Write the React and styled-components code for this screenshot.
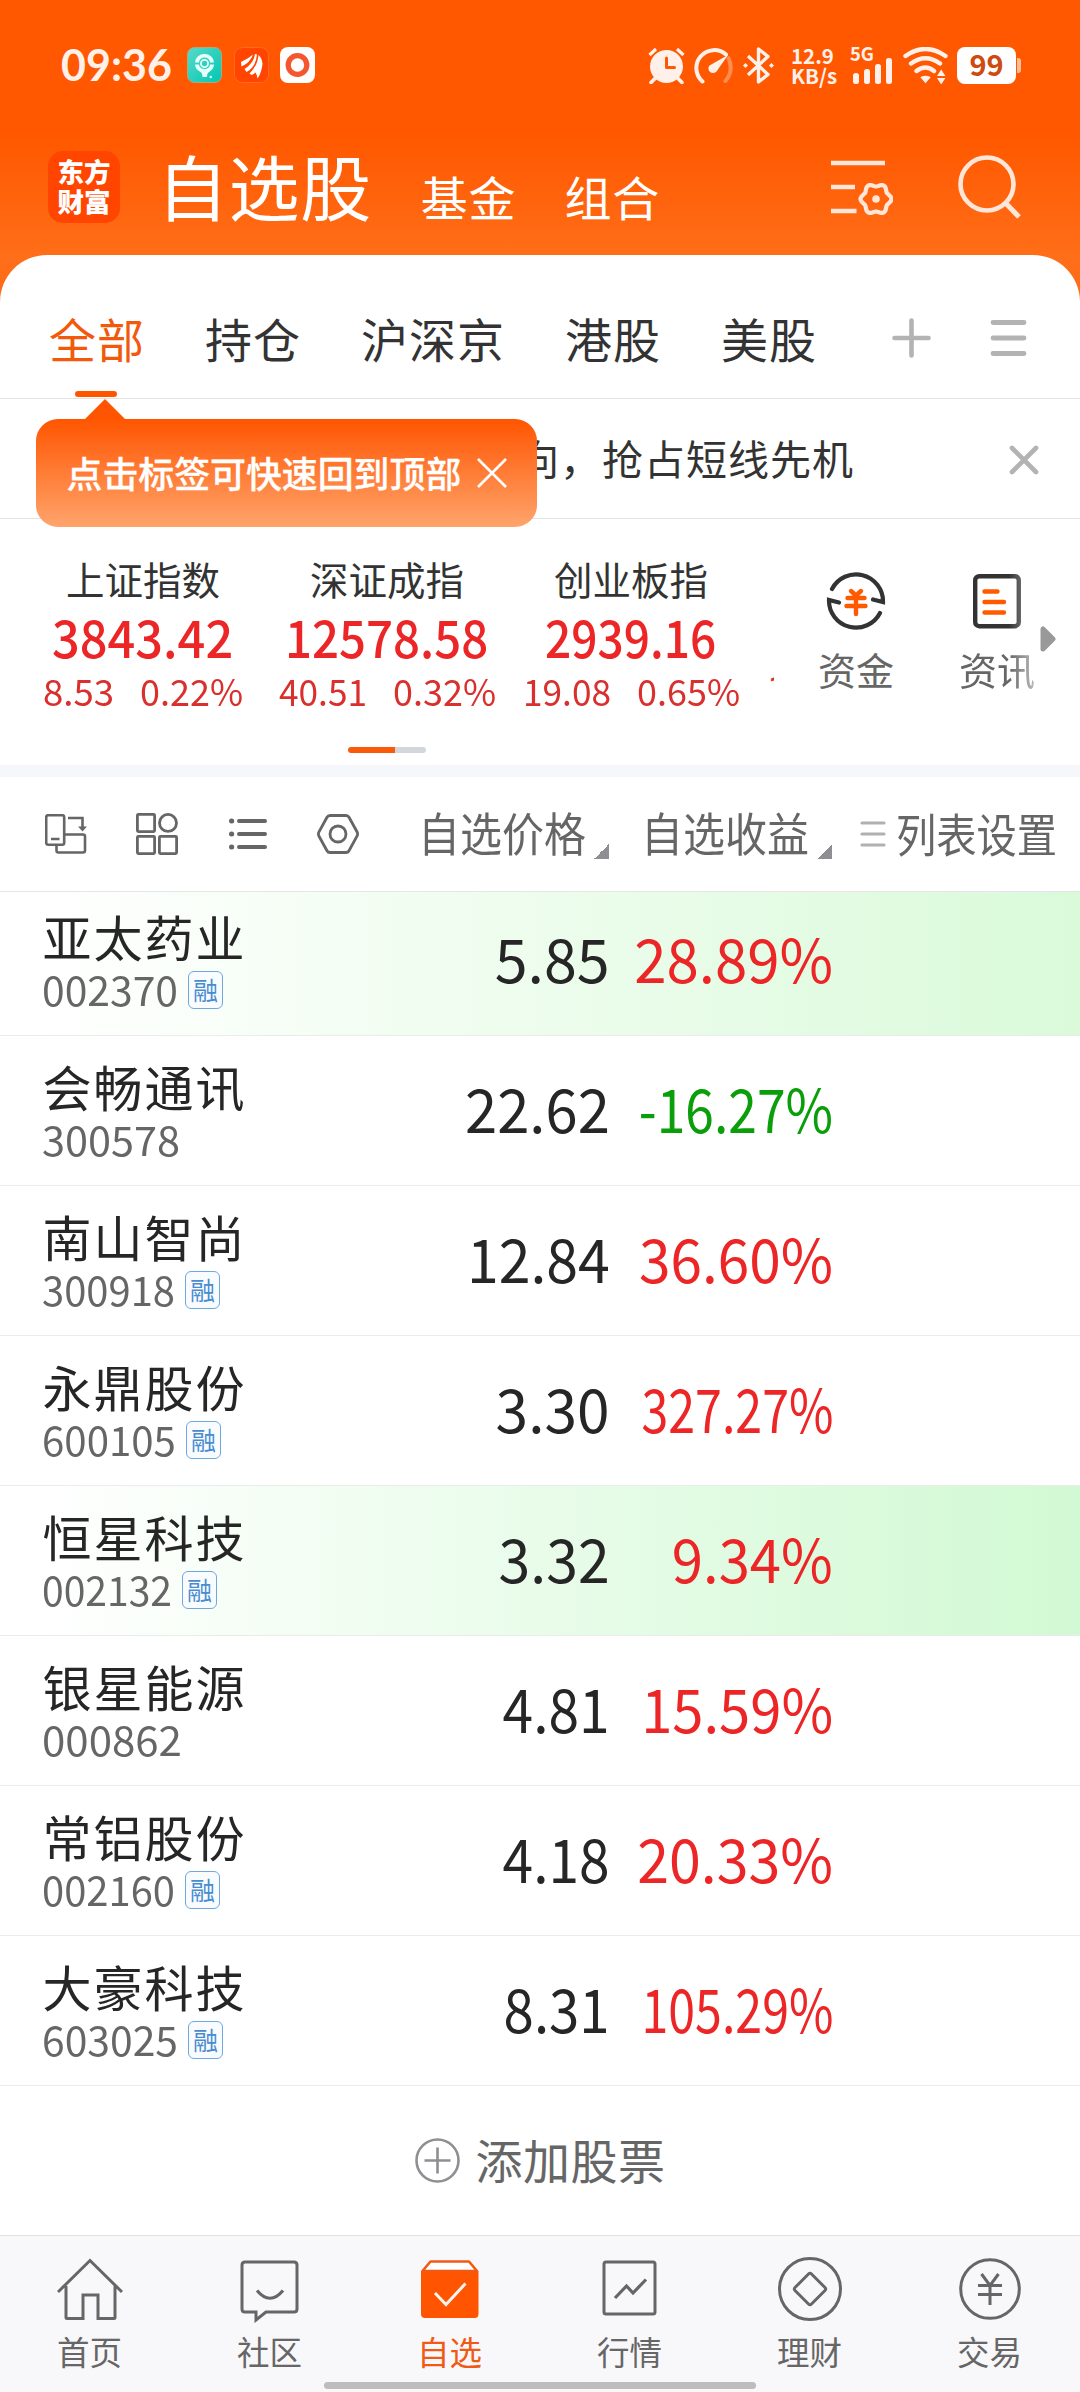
import styled, { createGlobalStyle } from 'styled-components';

const GlobalStyle = createGlobalStyle`
    * {
        box-sizing: border-box;
    }
    body {
        margin: 0;
        background: #fff;
        font-family: 'Noto Sans CJK SC', 'Noto Sans', sans-serif;
        color: #333;
    }
`

const tabs = ['全部', '持仓', '沪深京', '港股', '美股'];

const indexes = [
    { name: '上证指数', value: '3843.42', change: '8.53', percent: '0.22%', valueWidth: 182 },
    { name: '深证成指', value: '12578.58', change: '40.51', percent: '0.32%', valueWidth: 204 },
    { name: '创业板指', value: '2939.16', change: '19.08', percent: '0.65%', valueWidth: 172 },
];

const stocks = [
    { name: '亚太药业', code: '002370', margin: true, price: '5.85', profit: '28.89%', flash: '#dafada', codeWidth: 136, priceWidth: 115, profitWidth: 199 },
    { name: '会畅通讯', code: '300578', price: '22.62', profit: '-16.27%', codeWidth: 138, priceWidth: 145, profitWidth: 194 },
    { name: '南山智尚', code: '300918', margin: true, price: '12.84', profit: '36.60%', codeWidth: 133, priceWidth: 143, profitWidth: 194 },
    { name: '永鼎股份', code: '600105', margin: true, price: '3.30', profit: '327.27%', codeWidth: 134, priceWidth: 114, profitWidth: 192 },
    { name: '恒星科技', code: '002132', margin: true, price: '3.32', profit: '9.34%', flash: '#d1f9d3', codeWidth: 130, priceWidth: 111, profitWidth: 161 },
    { name: '银星能源', code: '000862', price: '4.81', profit: '15.59%', codeWidth: 140, priceWidth: 107, profitWidth: 192 },
    { name: '常铝股份', code: '002160', margin: true, price: '4.18', profit: '20.33%', codeWidth: 133, priceWidth: 107, profitWidth: 196 },
    { name: '大豪科技', code: '603025', margin: true, price: '8.31', profit: '105.29%', codeWidth: 136, priceWidth: 106, profitWidth: 192 },
];

// natural width of a run of digits, in em
const emWidth = (text) => [...text].reduce((sum, c) => sum + (c === '.' ? 0.278 : c === '-' ? 0.347 : c === '%' ? 0.921 : 0.555), 0);

function Digits({ text, size, width, color, bold, right }) {
    // the heavier cut runs a little wider
    const scale = width / (emWidth(text) * size * (bold ? 1.035 : 1));
    return (
        <DigitsBox $size={size} $color={color} $bold={bold} $right={right} style={{ width }}>
            <span style={{ transform: `scaleX(${scale.toFixed(3)})` }}>{text}</span>
        </DigitsBox>
    )
}

export default function App() {
    return (
        <Page>
            <GlobalStyle />
            <StatusBar />
            <Header>
                <Logo><span>东方</span><span>财富</span></Logo>
                <Title>自选股</Title>
                <HeaderLink>基金</HeaderLink>
                <HeaderLink>组合</HeaderLink>
                <HeaderIcons>
                    <ManageIcon />
                    <SearchIcon />
                </HeaderIcons>
            </Header>
            <Sheet>
                <TabBar>
                    {tabs.map((tab, index) => <Tab key={tab} $active={index === 0}>{tab}</Tab>)}
                    <TabIcons>
                        <svg width="39" height="40" viewBox="0 0 39 40"><path d="M19.5 2.5v35M2.5 20h34" stroke="#b3b3b3" strokeWidth="4.6" strokeLinecap="round" /></svg>
                        <svg width="37" height="38" viewBox="0 0 37 38"><path d="M3 3.5h31M3 19h31M3 34.5h31" stroke="#b3b3b3" strokeWidth="4.8" strokeLinecap="round" /></svg>
                    </TabIcons>
                    <Tip>
                        <span>点击标签可快速回到顶部</span>
                        <svg width="30" height="30" viewBox="0 0 30 30"><path d="M1 1l28 28M29 1L1 29" stroke="#fff" strokeWidth="2.6" /></svg>
                    </Tip>
                </TabBar>
                <Notice>
                    <span>向，抢占短线先机</span>
                    <svg width="30" height="30" viewBox="0 0 30 30"><path d="M3 3l24 24M27 3L3 27" stroke="#b3b3b3" strokeWidth="4.6" strokeLinecap="round" /></svg>
                </Notice>
                <Market>
                    <IndexStrip>
                        {indexes.map((item) => (
                            <IndexCard key={item.name}>
                                <IndexName>{item.name}</IndexName>
                                <Digits text={item.value} size={52} width={item.valueWidth} color="#ec2627" bold />
                                <IndexChange>
                                    <Digits text={item.change} size={37} width={item.change.length > 4 ? 88 : 71} color="#d9302e" />
                                    <Digits text={item.percent} size={37} width={103} color="#d9302e" />
                                </IndexChange>
                            </IndexCard>
                        ))}
                        <NextCard>1</NextCard>
                    </IndexStrip>
                    <Tools>
                        <Tool><FundsIcon />资金</Tool>
                        <Tool $faded><NewsIcon />资讯</Tool>
                    </Tools>
                    <MoreArrow width="16" height="26" viewBox="0 0 16 26"><path d="M3 3v20L13 13z" fill="#999" stroke="#999" strokeWidth="5" strokeLinejoin="round" /></MoreArrow>
                </Market>
                <Pager />
                <Toolbar>
                    <ToolbarIcons>
                        <SwitchIcon />
                        <GridIcon />
                        <ListIcon />
                        <HexIcon />
                    </ToolbarIcons>
                    <SortLabel>
                        <Label $width={168}><span>自选价格</span></Label>
                        <Corner />
                    </SortLabel>
                    <SortLabel>
                        <Label $width={168}><span>自选收益</span></Label>
                        <Corner />
                    </SortLabel>
                    <MenuLines width="26" height="26" viewBox="0 0 26 26"><path d="M2 2h22M2 13h22M2 24h22" stroke="#b0b0b0" strokeWidth="3.2" strokeLinecap="round" /></MenuLines>
                    <Label $width={161}><span>列表设置</span></Label>
                </Toolbar>
                <StockList>
                    {stocks.map((stock) => <StockRow key={stock.code} stock={stock} />)}
                </StockList>
                <AddStock>
                    <svg width="45" height="45" viewBox="0 0 45 45" fill="none" stroke="#8e8e93" strokeWidth="2.6"><circle cx="22.5" cy="22.5" r="21" /><path d="M22.5 9.5v26M9.5 22.5h26" /></svg>
                    <span>添加股票</span>
                </AddStock>
            </Sheet>
            <BottomNav />
        </Page>
    )
}

function StatusBar() {
    return (
        <Status>
            <Clock>09:36</Clock>
            <AppBadges>
                <svg width="35" height="36" viewBox="0 0 35 36">
                    <defs><linearGradient id="teal" x1="0" y1="0" x2="1" y2="1"><stop offset="0" stopColor="#5ad8c8" /><stop offset="1" stopColor="#00c8b4" /></linearGradient></defs>
                    <rect x=".5" y=".5" width="34" height="35" rx="7" fill="url(#teal)" stroke="#b3a878" />
                    <path d="M8 15.500a9.500 8.500 0 0 1 19 0h-4a5.500 5 0 0 0-11 0zM8 17.500h4a5.500 4.500 0 0 0 11 0h4q-.5 5-5 7.500q-2 1-2 5h-4.500q0-4-2-5q-5-2.500-5.500-7.500z" fill="#e6fffb" />
                    <circle cx="17.500" cy="16.500" r="3.600" fill="none" stroke="#e6fffb" strokeWidth="1.800" />
                    <circle cx="23.800" cy="30" r="1.300" fill="#e6fffb" />
                </svg>
                <svg width="35" height="36" viewBox="0 0 35 36">
                    <rect x=".5" y=".5" width="34" height="35" rx="8" fill="#ff4500" stroke="#ff6a26" />
                    <path d="M7 15Q15 11 19 7.500Q16 16 7.500 19.500zM10.500 22Q20 16 21 7l2 .5Q22 20 12.500 25zM15.500 26.500Q23.500 19 24.500 8Q28 11 28.500 17Q27.500 26 23.500 31.500Q23 27.500 21.500 25.500Q19 27.500 17.500 28z" fill="#fff" />
                </svg>
                <svg width="35" height="36" viewBox="0 0 35 36">
                    <rect width="35" height="36" rx="8" fill="#fff" />
                    <circle cx="17.500" cy="18" r="9.300" fill="none" stroke="#f4562f" strokeWidth="5.200" />
                </svg>
            </AppBadges>
            <StatusIcons>
                <svg width="37" height="37" viewBox="0 0 37 37" fill="none" stroke="#fff0ea">
                    <circle cx="18.500" cy="19.500" r="16.500" fill="#fff0ea" stroke="none" />
                    <path d="M1.500 8L8 2M35.500 8L29 2" strokeWidth="3.200" />
                    <path d="M3 35.500l6-6M34 35.500l-6-6" strokeWidth="3.600" strokeLinecap="round" />
                    <path d="M18.500 11v9.500h8" stroke="#ff5800" strokeWidth="3" strokeLinecap="round" strokeLinejoin="round" />
                </svg>
                <svg width="40" height="37" viewBox="0 0 40 37" fill="none" strokeLinecap="round">
                    <path d="M34.500 11Q40 24 31.500 34" stroke="#ff8c50" strokeWidth="4" />
                    <path d="M8.500 34.500A17.300 17.300 0 1 1 32 7.500" stroke="#fff0ea" strokeWidth="4" />
                    <path d="M34 8L15.500 18.500a4.600 4.600 0 1 0 7 6z" fill="#fff0ea" />
                </svg>
                <svg width="31" height="37" viewBox="0 0 31 37" fill="none" stroke="#fff0ea" strokeWidth="3.400">
                    <path d="M5 9l20 18.500L15.500 35V2L25 9.500L5 28" strokeLinejoin="round" />
                    <path d="M2.500 16l2.500 2.500L2.500 21L0 18.500zM28.500 16l2.500 2.500l-2.500 2.500L26 18.500z" fill="#fff0ea" stroke="none" />
                </svg>
                <Speed><span>12.9</span><span>KB/s</span></Speed>
                <svg width="44" height="37" viewBox="0 0 44 37" fill="#fff0ea" overflow="visible">
                    <text x="0" y="14" fontFamily="Noto Sans CJK SC" fontWeight="700" fontSize="19" textLength="24" lengthAdjust="spacingAndGlyphs">5G</text>
                    <rect x="3" y="26" width="6" height="11" rx="2.500" />
                    <rect x="14" y="22" width="6" height="15" rx="2.500" />
                    <rect x="25" y="17" width="6" height="20" rx="2.500" />
                    <rect x="36" y="11" width="6" height="26" rx="2.500" />
                </svg>
                <svg width="45" height="37" viewBox="0 0 45 37" fill="none" stroke="#fff0ea" strokeWidth="4.400" strokeLinecap="round">
                    <path d="M2.500 9Q22.500-5 42.500 9M8 16.500Q22.500 6 37 16.500M13.500 24Q22.500 17 31 24" />
                    <path d="M18.500 30.500Q22.500 28.500 26.500 30.500L22.500 35z" fill="#fff0ea" strokeWidth="1.500" />
                    <path d="M34 29l4.200-6.500l4.200 6.500zM34 31h8.400l-4.200 6.500z" fill="#fff0ea" stroke="none" />
                </svg>
                <Battery>99</Battery>
            </StatusIcons>
        </Status>
    )
}

function StockRow({ stock }) {
    return (
        <Row $flash={stock.flash}>
            <StockInfo>
                <StockName>{stock.name}</StockName>
                <StockCode>
                    <Digits text={stock.code} size={41} width={stock.codeWidth} color="#666" />
                    {stock.margin && <MarginTag>融</MarginTag>}
                </StockCode>
            </StockInfo>
            <Price>
                <Digits text={stock.price} size={60} width={stock.priceWidth} color="#262626" right />
            </Price>
            <Profit>
                <Digits text={stock.profit} size={60} width={stock.profitWidth} color={stock.profit[0] === '-' ? '#0a9e0a' : '#ec2627'} right />
            </Profit>
        </Row>
    )
}

// six-lobed cog outline around (45, 40)
const cogPath = 'M' + Array.from({ length: 72 }, (_, i) => {
    const angle = i * Math.PI / 36;
    const r = 14 + 1.5 * Math.cos(6 * angle);
    return `${(45 + r * Math.cos(angle)).toFixed(1)} ${(40 + r * Math.sin(angle)).toFixed(1)}`;
}).join('L') + 'z';

const ManageIcon = () => (
    <svg width="62" height="58" viewBox="0 0 62 58" fill="none" stroke="#ffe6d8" strokeWidth="4.600">
        <path d="M0 4h54M0 28h24M0 52h25.500" />
        <path d={cogPath} strokeWidth="4.200" />
        <circle cx="45" cy="40" r="3.800" fill="#ffe6d8" stroke="none" />
    </svg>
)

const SearchIcon = () => (
    <svg width="64" height="64" viewBox="0 0 64 64" fill="none" stroke="#ffe6d8" strokeWidth="4.600">
        <circle cx="29" cy="29" r="26.500" />
        <path d="M47.500 48L61 62" strokeWidth="5" />
    </svg>
)

const FundsIcon = () => (
    <svg width="60" height="60" viewBox="0 0 60 60" fill="none" stroke="#333" strokeWidth="4.200" strokeLinecap="round">
        <path d="M6 18A27 27 0 0 1 57 31L47 28.500" />
        <path d="M54 42A27 27 0 0 1 3 29L13 31.500" />
        <path d="M25 20l5 4.500l5-4.500M21.500 27h17M20.500 35h19M30 25v18" stroke="#ff5a00" strokeWidth="4.400" />
    </svg>
)

const NewsIcon = () => (
    <svg width="60" height="60" viewBox="0 0 60 60" fill="none" strokeLinecap="round">
        <rect x="8.200" y="5.200" width="43.600" height="50" rx="4" stroke="#333" strokeWidth="4.400" />
        <path d="M17.500 20.500h13M17.500 31h19.500M17.500 41.500h19.500" stroke="#ff5a00" strokeWidth="4.400" />
    </svg>
)

const SwitchIcon = () => (
    <svg width="42" height="40" viewBox="0 0 42 40" fill="none" stroke="#666" strokeWidth="2.600">
        <rect x="1.200" y="1.200" width="18" height="29.500" rx="2" />
        <path d="M6 25h8.500M19.500 20.500h18.500q2 0 2 2v14q0 2-2 2H13.500q-2 0-2-2V31M23 4h14.500v10" />
        <path d="M33 12.500h9L37.500 17.500z" fill="#666" stroke="none" />
    </svg>
)

const GridIcon = () => (
    <svg width="42" height="42" viewBox="0 0 42 42" fill="none" stroke="#666" strokeWidth="2.800">
        <rect x="1.400" y="1.400" width="17.200" height="17.200" rx="1" />
        <circle cx="32" cy="9.900" r="8.500" />
        <rect x="1.400" y="23.400" width="17.200" height="17.200" rx="1" />
        <rect x="23.400" y="23.400" width="17.200" height="17.200" rx="1" />
    </svg>
)

const ListIcon = () => (
    <svg width="38" height="32" viewBox="0 0 38 32" stroke="#666" strokeWidth="4" strokeLinecap="round">
        <path d="M10 3h26M10 16h26M10 29h26" />
        <path d="M2.500 3h.2M2.500 16h.2M2.500 29h.2" strokeWidth="5" />
    </svg>
)

const HexIcon = () => (
    <svg width="42" height="40" viewBox="0 0 42 40" fill="none" stroke="#666" strokeWidth="2.800">
        <path d="M13 1.500h16q2 0 3 1.800l8 14.500q1.200 2.200 0 4.400l-8 14.500q-1 1.800-3 1.800H13q-2 0-3-1.800L2 22.200q-1.200-2.200 0-4.400l8-14.500q1-1.800 3-1.800z" />
        <circle cx="21" cy="20" r="8" />
    </svg>
)

function BottomNav() {
    return (
        <Nav>
            <NavItem>
                <svg viewBox="0 0 66 66">
                    <path d="M1 35L33 3.500L65 35M9 29v31.500q0 1 1 1h16V38h15v23.500h16q1 0 1-1V29" />
                </svg>
                首页
            </NavItem>
            <NavItem>
                <svg viewBox="0 0 66 66">
                    <path d="M8 5h49q3 0 3 3v44q0 3-3 3H29l-10 8v-8H8q-3 0-3-3V8q0-3 3-3z" />
                    <path d="M20 33.500Q33 49 46 33.500" strokeWidth="3.200" />
                </svg>
                社区
            </NavItem>
            <NavItem $active>
                <svg viewBox="0 0 66 66">
                    <path d="M4 14h57.500v43q0 4-4 4H8q-4 0-4-4z" fill="#ff5500" stroke="none" />
                    <path d="M5.500 14L13.500 4.500h38.500L60 14z" fill="#fff" stroke="#f05a14" strokeWidth="2.600" strokeLinejoin="round" />
                    <path d="M18 36l11 11.500L48.500 26.500" stroke="#fff4ee" />
                </svg>
                自选
            </NavItem>
            <NavItem>
                <svg viewBox="0 0 66 66">
                    <rect x="7" y="5" width="51" height="52" rx="2" />
                    <path d="M18 41l11.500-12l6.500 7L49 22.500" strokeWidth="3.200" />
                </svg>
                行情
            </NavItem>
            <NavItem>
                <svg viewBox="0 0 66 66">
                    <circle cx="33" cy="32" r="30.500" />
                    <path d="M31.500 17q1.500-1.500 3 0l13.500 13.500q1.500 1.500 0 3L34.500 47q-1.500 1.500-3 0L18 33.500q-1.500-1.500 0-3z" />
                </svg>
                理财
            </NavItem>
            <NavItem>
                <svg viewBox="0 0 66 66">
                    <circle cx="33" cy="32" r="29.300" />
                    <path d="M24.500 17L33 28.500L41.500 17M21 28.500h24M21 37.500h24M33 28.500V48" />
                </svg>
                交易
            </NavItem>
            <HomeBar />
        </Nav>
    )
}

const Page = styled.div`
    position: relative;
    width: 1080px;
    height: 2392px;
    overflow: hidden;
    display: flex;
    flex-direction: column;
    background: linear-gradient(#ff5800 0, #ff5800 136px, #ff6e18 256px, #ff6a18 310px);
`
const Status = styled.div`
    display: flex;
    align-items: center;
    height: 130px;
    padding: 0 60px 0 61px;
`
const Clock = styled.div`
    width: 126px;
    font: 700 43px/50px 'Lato', sans-serif;
    color: #fff0ea;
`
const AppBadges = styled.div`
    display: flex;
    gap: 11.5px;
`
const StatusIcons = styled.div`
    display: flex;
    align-items: center;
    gap: 9px;
    margin-left: auto;
`
const Speed = styled.div`
    display: flex;
    flex-direction: column;
    width: 58px;
    padding-left: 8px;
    font-size: 20.5px;
    font-weight: 700;
    line-height: 20px;
    color: #fff0ea;
`
const Battery = styled.div`
    position: relative;
    width: 59px;
    height: 37px;
    margin-right: 4px;
    border-radius: 8px;
    background: #fff;
    color: #cf4a10;
    font-size: 29px;
    font-weight: 700;
    line-height: 33px;
    text-align: center;

    &::after {
        content: '';
        position: absolute;
        left: 60px;
        top: 11px;
        width: 4px;
        height: 15px;
        border-radius: 0 3px 3px 0;
        background: #ffbd9c;
    }
`

const Header = styled.div`
    display: flex;
    align-items: flex-start;
    height: 125px;
    padding-left: 48px;
    color: #fff;
`
const Logo = styled.div`
    display: flex;
    flex-direction: column;
    align-items: center;
    width: 72px;
    height: 72px;
    margin-top: 21px;
    padding-top: 5px;
    border-radius: 15px;
    background: #ff4500;
    font-size: 26.5px;
    font-weight: 900;
    line-height: 30px;
`
const Title = styled.div`
    margin: 4px 0 0 37px;
    font-size: 71px;
    line-height: 100px;
    letter-spacing: 0.6px;
`
const HeaderLink = styled.div`
    margin: 36px 0 0 49px;
    font-size: 47px;
    line-height: 60px;
    letter-spacing: 0.8px;

    & + & {
        margin-left: 48px;
    }
`
const HeaderIcons = styled.div`
    display: flex;
    gap: 65px;
    margin: 25px 58px 0 auto;

    svg:first-child {
        margin-top: 4px;
    }
`

const Sheet = styled.div`
    display: flex;
    flex-direction: column;
    height: 1980px;
    border-radius: 47px 47px 0 0;
    background: #fff;
`
const TabBar = styled.div`
    position: relative;
    display: flex;
    align-items: center;
    gap: 60px;
    height: 144px;
    padding: 0 53.5px 0 49px;
    border-bottom: 1.5px solid #e2e2e2;
`
const Tab = styled.div`
    position: relative;
    margin-top: 23px;
    font-size: 47px;
    line-height: 60px;
    letter-spacing: 1px;
    color: ${(props) => props.$active ? '#f2590c' : '#333'};

    &::after {
        content: '';
        display: ${(props) => props.$active ? 'block' : 'none'};
        position: absolute;
        left: 26px;
        top: 83px;
        width: 42px;
        height: 6px;
        border-radius: 3px;
        background: #ff5500;
    }
`
const TabIcons = styled.div`
    display: flex;
    align-items: center;
    gap: 58.5px;
    margin: 23px 0 0 auto;
`
const Tip = styled.div`
    position: absolute;
    z-index: 1;
    left: 36px;
    top: 164px;
    display: flex;
    align-items: center;
    gap: 16px;
    width: 501px;
    height: 108px;
    padding-left: 30.5px;
    border-radius: 22px;
    background: linear-gradient(#ff5500, #ffa46c);
    color: #fff;
    font-size: 35.9px;
    font-weight: 500;
    line-height: 50px;
    -webkit-text-stroke: 0.3px #fff;

    span {
        padding-bottom: 2px;
    }

    &::before {
        content: '';
        position: absolute;
        left: 48px;
        top: -20px;
        border: 21px solid transparent;
        border-top: 0;
        border-bottom: 21px solid #ff5500;
    }
`
const Notice = styled.div`
    display: flex;
    align-items: center;
    justify-content: space-between;
    height: 120px;
    padding: 0 41px 0 518px;
    border-bottom: 1.5px solid #e2e2e2;
    font-size: 41px;
    line-height: 60px;
    letter-spacing: 1px;

    span {
        padding-bottom: 4px;
    }

    svg {
        margin-top: 2px;
    }
`
const Market = styled.div`
    display: flex;
    align-items: center;
    height: 228px;
    padding-left: 21px;
`
const IndexStrip = styled.div`
    display: flex;
    width: 753px;
    height: 228px;
    overflow: hidden;
`
const IndexCard = styled.div`
    display: flex;
    flex-direction: column;
    align-items: center;
    flex: 0 0 244px;
    padding-top: 34px;
`
const IndexName = styled.div`
    margin-bottom: 5px;
    font-size: 38.5px;
    line-height: 50px;
`
const IndexChange = styled.div`
    display: flex;
    gap: 26px;
    margin-top: 1px;
`
const NextCard = styled.div`
    flex: none;
    margin: 143px 0 0 15px;
    font-family: Roboto, sans-serif;
    font-size: 37px;
    line-height: 54px;
    color: #d9302e;
`
const DigitsBox = styled.div`
    display: flex;
    flex: none;
    justify-content: ${(props) => props.$right ? 'flex-end' : 'flex-start'};
    font-size: ${(props) => props.$size}px;
    font-weight: ${(props) => props.$bold ? 500 : 400};
    line-height: ${(props) => props.$bold ? 56 : 50}px;
    color: ${(props) => props.$color};
    white-space: nowrap;

    span {
        flex: none;
        transform-origin: ${(props) => props.$right ? 'right' : 'left'} center;
    }
`
const Tools = styled.div`
    display: flex;
    gap: 61px;
    margin: 0 4px 0 42px;
    padding-bottom: 1px;
`
const Tool = styled.div`
    display: flex;
    flex-direction: column;
    align-items: center;
    gap: 13.5px;
    width: 80px;
    font-size: 38px;
    line-height: 50px;
    color: #666;
    ${(props) => props.$faded && 'mask-image: linear-gradient(90deg, #000 65%, rgba(0, 0, 0, 0.4));'}
`
const MoreArrow = styled.svg`
    flex: none;
    margin: 12px 0 0 -1px;
`
const Pager = styled.div`
    flex: none;
    height: 30px;
    border-bottom: 12px solid #f6f7fa;

    &::before {
        content: '';
        display: block;
        width: 78px;
        height: 6px;
        margin-left: 348px;
        border-radius: 3px;
        background: linear-gradient(90deg, #fa5a0a 47px, #d3d6db 47px);
    }
`
const Toolbar = styled.div`
    display: flex;
    align-items: center;
    flex: none;
    height: 115px;
    padding-left: 45px;
    border-bottom: 1.5px solid #e6e6e6;
`
const ToolbarIcons = styled.div`
    display: flex;
    align-items: center;
    gap: 50px;
    margin: 0 59px 0 0;

    svg:nth-child(2) {
        margin: 0 1px 0 -1px;
    }
`
const SortLabel = styled.div`
    display: flex;
    align-items: flex-end;
    gap: 7px;
    margin: -3px 33px 0 0;
`
const MenuLines = styled.svg`
    flex: none;
    margin: 0 10px 0 -4px;
`
const Label = styled.div`
    flex: none;
    width: ${(props) => props.$width}px;
    margin-top: -4px;
    font-size: 46px;
    line-height: 60px;
    color: #666;
    white-space: nowrap;

    span {
        display: inline-block;
        transform: scaleX(${(props) => props.$width / 184});
        transform-origin: left center;
    }
`
const Corner = styled.div`
    width: 15px;
    height: 15px;
    margin: 0 -1px 2px 1px;
    background: linear-gradient(135deg, transparent 50%, #8e8e93 50%);
`
const StockList = styled.div`
    display: flex;
    flex-direction: column;
    justify-content: flex-end;
    flex: none;
    height: 1194px;
    overflow: hidden;
`
const Row = styled.div`
    display: flex;
    align-items: center;
    flex: none;
    height: 150px;
    padding-left: 42px;
    border-bottom: 1.5px solid #ebebeb;
    background: ${(props) => props.$flash ? `linear-gradient(90deg, #fff 3%, ${props.$flash})` : '#fff'};
`
const StockInfo = styled.div`
    width: 300px;
`
const StockName = styled.div`
    padding-left: 0.5px;
    font-size: 49px;
    line-height: 54px;
    letter-spacing: 2px;
    color: #262626;
`
const StockCode = styled.div`
    display: flex;
    align-items: center;
    gap: 10px;
`
const MarginTag = styled.div`
    width: 35px;
    height: 38px;
    margin-top: 4px;
    border: 1.5px solid #6fa8de;
    border-radius: 6px;
    background: #f8fcff;
    color: #4a8ccf;
    font-size: 25px;
    line-height: 34px;
    text-align: center;
`
const Price = styled.div`
    display: flex;
    justify-content: flex-end;
    width: 268px;
    margin: -8px auto 0 0;
`
const Profit = styled.div`
    margin: -8px 247px 0 0;
`
const AddStock = styled.div`
    display: flex;
    align-items: center;
    justify-content: center;
    gap: 16px;
    height: 149px;
    font-size: 47px;
    line-height: 60px;
    letter-spacing: 0.5px;
    color: #666;

    span {
        padding-bottom: 3px;
    }
`
const Nav = styled.div`
    position: relative;
    display: grid;
    grid-template-columns: repeat(6, 180px);
    height: 157px;
    border-top: 1.5px solid #e2e2e2;
    background: #f8f8fb;
`
const NavItem = styled.div`
    display: flex;
    flex-direction: column;
    align-items: center;
    padding: 21px 1px 0 0;
    font-size: 32.5px;
    line-height: 50px;
    color: ${(props) => props.$active ? '#f05a14' : '#666'};

    svg {
        width: 66px;
        height: 66px;
        margin-bottom: 3px;
        fill: none;
        stroke: #666;
        stroke-width: 3px;
    }
`
const HomeBar = styled.div`
    position: absolute;
    left: 324px;
    bottom: 3px;
    width: 432px;
    height: 7px;
    border-radius: 4px;
    background: #bdbdbd;
`
